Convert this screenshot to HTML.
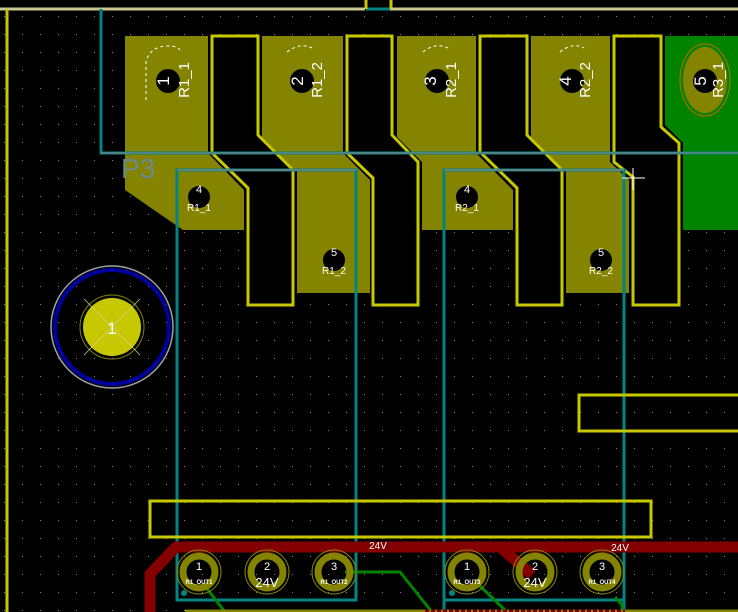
<!DOCTYPE html>
<html><head><meta charset="utf-8"><style>
html,body{margin:0;padding:0;background:#000;}
svg{display:block;}
text{font-family:"Liberation Sans",sans-serif;fill:#fff;}
</style></head><body>
<svg width="738" height="612" viewBox="0 0 738 612" xmlns="http://www.w3.org/2000/svg">
<defs>
<pattern id="g" x="4" y="16" width="18" height="18" patternUnits="userSpaceOnUse">
<rect x="0" y="0" width="1" height="1" fill="#848484"/>
</pattern>
</defs>
<rect width="738" height="612" fill="#000"/>
<rect width="738" height="612" fill="url(#g)"/>

<polygon points="665,36 738,36 738,230 683,230 683,143 665,125" fill="#008400"/>
<ellipse cx="705" cy="80" rx="25" ry="36" fill="none" stroke="#c86400" stroke-width="1"/>
<ellipse cx="705" cy="80" rx="22" ry="33" fill="#848400"/>

<g fill="#848400">
<polygon points="125,36 208,36 208,153 244,190 244,230 183,230 125,190"/>
<polygon points="262,36 343,36 343,153 370,180 370,293 297,293 297,172 262,137"/>
<polygon points="397,36 476,36 476,153 513,190 513,230 422,230 422,162 397,137"/>
<polygon points="531,36 610,36 610,162 629,180 629,293 566,293 566,172 531,137"/>
</g>

<g fill="#000" stroke="#c8c800" stroke-width="3" stroke-linejoin="miter">
<polygon points="212,36 258,36 258,135 293,170 293,305 248,305 248,188 212,153"/>
<polygon points="347,36 392,36 392,135 418,162 418,305 373,305 373,178 347,153"/>
<polygon points="480,36 527,36 527,135 562,170 562,305 517,305 517,188 480,152"/>
<polygon points="614,36 661,36 661,127 679,143 679,305 633,305 633,177 614,162"/>
</g>

<g fill="#000">
<circle cx="168" cy="81" r="12"/><circle cx="302" cy="81" r="12"/>
<circle cx="437" cy="81" r="12"/><circle cx="572" cy="81" r="12"/>
<circle cx="705" cy="81" r="12"/>
<circle cx="199" cy="197" r="11"/><circle cx="334" cy="260" r="11"/>
<circle cx="467" cy="197" r="11"/><circle cx="601" cy="260" r="11"/>
</g>
<g fill="none" stroke="#fff" stroke-width="1" stroke-dasharray="3,3">
<path d="M146,100 L146,62 Q150,46 168,46 Q178,46 180,50"/>
<path d="M287,52 Q300,42 312,48"/>
<path d="M423,52 Q435,42 448,48"/>
<path d="M560,52 Q572,42 584,48"/>
</g>
<g font-size="17">
<text transform="translate(163,81) rotate(-90)" text-anchor="middle" dy="6">1</text>
<text transform="translate(297,81) rotate(-90)" text-anchor="middle" dy="6">2</text>
<text transform="translate(430,81) rotate(-90)" text-anchor="middle" dy="6">3</text>
<text transform="translate(565,81) rotate(-90)" text-anchor="middle" dy="6">4</text>
<text transform="translate(700,81) rotate(-90)" text-anchor="middle" dy="6">5</text>
</g>
<g font-size="15">
<text transform="translate(184,80) rotate(-90)" text-anchor="middle" dy="5">R1_1</text>
<text transform="translate(317,80) rotate(-90)" text-anchor="middle" dy="5">R1_2</text>
<text transform="translate(451,80) rotate(-90)" text-anchor="middle" dy="5">R2_1</text>
<text transform="translate(585,80) rotate(-90)" text-anchor="middle" dy="5">R2_2</text>
<text transform="translate(718,80) rotate(-90)" text-anchor="middle" dy="5">R3_1</text>
</g>
<g font-size="11" text-anchor="middle">
<text x="199" y="193">4</text><text x="199" y="211" font-size="10">R1_1</text>
<text x="334" y="256">5</text><text x="334" y="274" font-size="10">R1_2</text>
<text x="467" y="193">4</text><text x="467" y="211" font-size="10">R2_1</text>
<text x="601" y="256">5</text><text x="601" y="274" font-size="10">R2_2</text>
</g>

<line x1="0" y1="9" x2="365" y2="9" stroke="#c8c890" stroke-width="3"/>
<line x1="390" y1="9" x2="738" y2="9" stroke="#c8c890" stroke-width="3"/>
<line x1="366" y1="9" x2="390" y2="9" stroke="#008484" stroke-width="3"/>
<line x1="366" y1="0" x2="366" y2="9" stroke="#c8c800" stroke-width="3"/>
<line x1="391" y1="0" x2="391" y2="9" stroke="#c8c800" stroke-width="3"/>
<line x1="7" y1="9" x2="7" y2="612" stroke="#c8c800" stroke-width="3"/>
<g fill="none" stroke="#008484" stroke-width="3">
<polyline points="101,9 101,153 738,153"/>
<rect x="177" y="170" width="179" height="430"/>
<polyline points="444,612 444,170 624,170 624,612"/>
<line x1="444" y1="600" x2="624" y2="600"/>
</g>
<line x1="101" y1="153" x2="738" y2="153" stroke="#848484" stroke-width="2" opacity="0.6"/>
<line x1="177" y1="170" x2="356" y2="170" stroke="#848484" stroke-width="2" opacity="0.7"/>
<line x1="444" y1="170" x2="624" y2="170" stroke="#848484" stroke-width="2" opacity="0.7"/>
<text x="121" y="178" font-size="28" style="fill:#6a8a8c">P3</text>
<line x1="622" y1="178" x2="645" y2="178" stroke="#fff"/>
<line x1="633" y1="168" x2="633" y2="190" stroke="#fff"/>

<circle cx="112" cy="327" r="61" fill="none" stroke="#a0a0a0" stroke-width="1.5"/>
<circle cx="112" cy="327" r="57" fill="none" stroke="#0000a0" stroke-width="4"/>
<circle cx="112" cy="327" r="32" fill="none" stroke="#848400" stroke-width="1"/>
<circle cx="112" cy="327" r="29" fill="#c8c800"/>
<line x1="84" y1="299" x2="140" y2="355" stroke="#d0d0a0" stroke-width="0.7"/>
<line x1="140" y1="299" x2="84" y2="355" stroke="#d0d0a0" stroke-width="0.7"/>
<text x="112" y="334" font-size="17" text-anchor="middle">1</text>

<rect x="579" y="395" width="162" height="36" fill="none" stroke="#c8c800" stroke-width="3"/>
<rect x="150" y="501" width="501" height="36" fill="none" stroke="#c8c800" stroke-width="3"/>

<g fill="none" stroke="#840000" stroke-width="11" stroke-linejoin="round">
<polyline points="150,612 150,574 176,547 500,547"/>
<polyline points="500,547 738,547"/>
<polyline points="500,547 532,575"/>
</g>
<text x="378" y="549" font-size="10" text-anchor="middle">24V</text>
<text x="620" y="551" font-size="10" text-anchor="middle">24V</text>

<g fill="none" stroke="#008400" stroke-width="3">
<polyline points="345,572 400,572 432,612"/>
<line x1="205" y1="586" x2="225" y2="612"/>
<line x1="480" y1="586" x2="507" y2="612"/>
<polyline points="615,597 622,605 622,612"/>
</g>
<line x1="185" y1="611" x2="738" y2="611" stroke="#848400" stroke-width="3"/>
<line x1="425" y1="611" x2="625" y2="611" stroke="#840000" stroke-width="3" stroke-dasharray="4,2"/>

<g fill="none" stroke="#848400" stroke-width="1">
<circle cx="199" cy="572" r="22"/><circle cx="267" cy="572" r="22"/><circle cx="334" cy="572" r="22"/>
<circle cx="467" cy="572" r="22"/><circle cx="535" cy="572" r="22"/><circle cx="602" cy="572" r="22"/>
</g>
<g fill="none" stroke="#848400" stroke-width="7">
<circle cx="199" cy="572" r="16"/><circle cx="267" cy="572" r="16"/><circle cx="334" cy="572" r="16"/>
<circle cx="467" cy="572" r="16"/><circle cx="535" cy="572" r="16"/><circle cx="602" cy="572" r="16"/>
</g>
<g font-size="11" text-anchor="middle">
<text x="199" y="570">1</text><text x="267" y="570">2</text><text x="334" y="570">3</text>
<text x="467" y="570">1</text><text x="535" y="570">2</text><text x="602" y="570">3</text>
</g>
<g font-size="6" text-anchor="middle" font-weight="bold">
<text x="199" y="584">R1_OUT1</text><text x="334" y="584">R1_OUT2</text>
<text x="467" y="584">R1_OUT3</text><text x="602" y="584">R1_OUT4</text>
</g>
<text x="267" y="587" font-size="13" text-anchor="middle">24V</text>
<text x="535" y="587" font-size="13" text-anchor="middle">24V</text>
<circle cx="184" cy="593" r="3" fill="#008484"/>
<circle cx="452" cy="593" r="3" fill="#008484"/>
</svg>
</body></html>
